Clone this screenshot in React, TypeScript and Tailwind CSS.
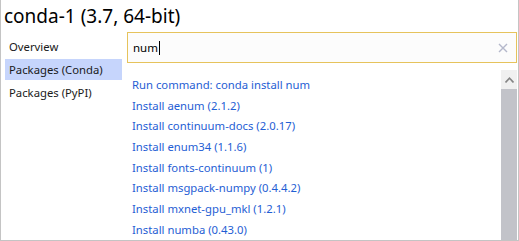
import React from "react";

const items = [
  "Install aenum (2.1.2)",
  "Install continuum-docs (2.0.17)",
  "Install enum34 (1.1.6)",
  "Install fonts-continuum (1)",
  "Install msgpack-numpy (0.4.4.2)",
  "Install mxnet-gpu_mkl (1.2.1)",
  "Install numba (0.43.0)",
];

export default function App() {
  return (
    <div
      className="w-[519px] h-[241px] bg-white border-l border-r border-b border-[#c4c4c4] overflow-hidden flex flex-col text-[#1a1a1a]"
      style={{ fontFamily: '"Segoe UI", "Noto Sans", sans-serif' }}
    >
      <div className="h-[32px] pl-[3px] pt-[4px] text-[19px] leading-[24px] text-black">
        conda-1 (3.7, 64-bit)
      </div>
      <div className="flex flex-1 min-h-0">
        <div className="w-[121px] pl-[4px] pt-[4px] flex flex-col gap-[2px] text-[11.3px]">
          <div className="h-[21px] leading-[21px] px-[4px]">Overview</div>
          <div className="h-[21px] leading-[21px] px-[4px] bg-[#c6d5fc]">Packages (Conda)</div>
          <div className="h-[21px] leading-[22px] px-[4px]">Packages (PyPI)</div>
        </div>
        <div className="flex-1 flex flex-col pl-[5px] pr-[1px] min-w-0">
          <div className="h-[31px] border border-[#e6c35c] bg-[#fcfcfc] flex items-center pl-[5px] pr-[8px] text-[11.5px] text-black">
            <span>num</span>
            <span className="w-px h-[14px] bg-black ml-[1px]" />
            <div className="flex-1" />
            <svg width="10" height="10" viewBox="0 0 10 10" className="text-[#b4b8cb]">
              <path d="M1 1 L9 9 M9 1 L1 9" stroke="currentColor" strokeWidth="1.4" />
            </svg>
          </div>
          <div className="flex flex-1 min-h-0 mt-[7px]">
            <div className="flex-1 pl-[5px] pt-[4px] flex flex-col text-[11.3px] text-[#1f5ed4] overflow-hidden">
              <div className="h-[20.7px] leading-[21px] shrink-0">Run command: conda install num</div>
              {items.map((t) => (
                <div key={t} className="h-[20.7px] leading-[21px] shrink-0">{t}</div>
              ))}
            </div>
            <div className="w-[16px] flex flex-col bg-[#c2c3c9]">
              <div className="h-[19px] bg-[#f0f0f0] flex items-center justify-center">
                <svg width="9" height="6" viewBox="0 0 9 6" className="text-[#858585]">
                  <path d="M0.5 5.5 L4.5 1.2 L8.5 5.5" fill="none" stroke="currentColor" strokeWidth="1.6" />
                </svg>
              </div>
            </div>
          </div>
        </div>
      </div>
    </div>
  );
}
